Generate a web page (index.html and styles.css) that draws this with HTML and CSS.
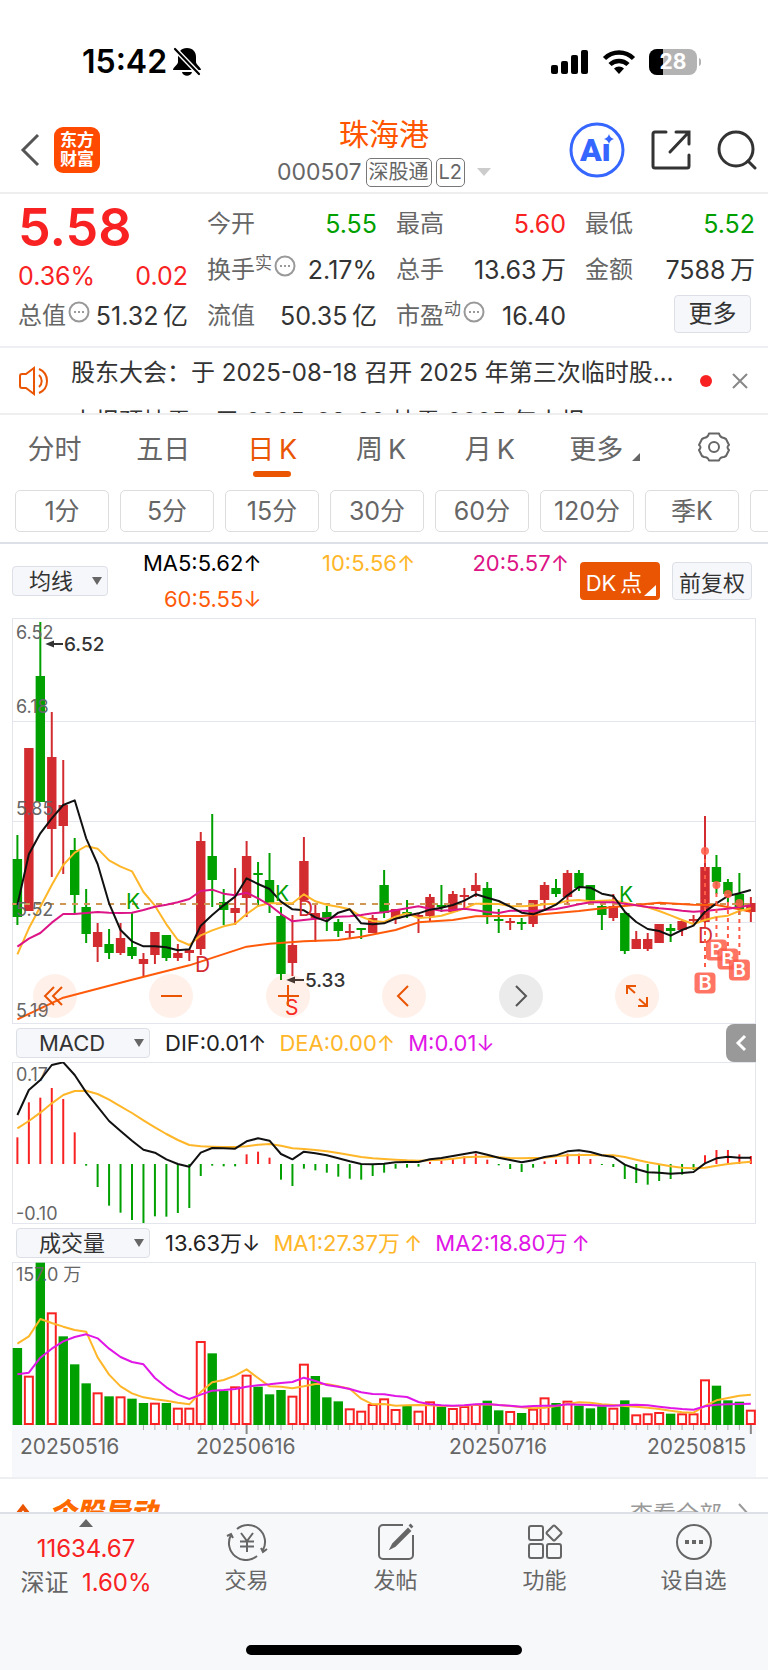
FILE: index.html
```html
<!DOCTYPE html>
<html lang="zh-CN">
<head>
    <meta charset="UTF-8">
    <meta name="viewport" content="width=device-width, initial-scale=1.0">
    <title>珠海港 000507</title>
    <link rel="stylesheet" href="styles.css">
</head>
<body>
    <div class="status-bar">
        <div class="status-time">
            <span>15:42</span>
            <svg width="28" height="30" viewBox="0 0 28 30">
                <path d="M14 1c-6 0-9 4-9 9v5c0 3-5 5-5 8h28c0-3-5-5-5-8v-5c0-5-3-9-9-9zM9 25h10c-1 5-9 5-10 0z" fill="#000"/>
                <path d="M1 1l26 27" stroke="#fff" stroke-width="5"/>
                <path d="M2 2l24 25" stroke="#000" stroke-width="2.200" stroke-linecap="round"/>
            </svg>
        </div>
        <div class="status-icons">
            <svg width="38" height="26" viewBox="0 0 38 26">
                <rect x="0" y="16" width="7" height="9" rx="2"/>
                <rect x="10" y="12" width="7" height="13" rx="2"/>
                <rect x="20" y="6" width="7" height="19" rx="2"/>
                <rect x="30" y="1" width="7" height="24" rx="2"/>
            </svg>
            <svg width="34" height="26" viewBox="0 0 34 26">
                <g fill="none" stroke="#000" stroke-width="4.500">
                    <path d="M2.500 9.500a20.500 20.500 0 0 1 29 0"/>
                    <path d="M8 15.500a13 13 0 0 1 18 0"/>
                </g>
                <path d="M17 25l-5-5.500a7 7 0 0 1 10 0z"/>
            </svg>
            <svg width="52" height="28" viewBox="0 0 52 28">
                <rect x="0" y="1" width="48" height="26" rx="8" fill="#b3b3b3"/>
                <path d="M14 1H8a8 8 0 0 0-8 8v10a8 8 0 0 0 8 8h6z"/>
                <path d="M50 10c3 1 3 7 0 8z" fill="#b3b3b3"/>
                <text x="24" y="21" class="battery-text">28</text>
            </svg>
        </div>
    </div>

    <header class="header">
        <div class="header-left">
            <button type="button" class="icon-btn" aria-label="返回">
                <svg width="20" height="34" viewBox="0 0 20 34"><path d="M18 2L3 17l15 15" fill="none" stroke="#555" stroke-width="3"/></svg>
            </button>
            <a href="#" class="logo">东方<br>财富</a>
        </div>
        <div class="header-title">
            <h1>珠海港</h1>
            <div class="header-code">
                <span>000507</span>
                <span class="tag">深股通</span>
                <span class="tag">L2</span>
                <svg width="14" height="8" viewBox="0 0 14 8"><path d="M0 0h14L7 8z" fill="#ccc"/></svg>
            </div>
        </div>
        <div class="header-right">
            <button type="button" class="icon-btn" aria-label="Ai">
                <svg width="56" height="56" viewBox="0 0 56 56">
                    <circle cx="28" cy="28" r="26" fill="#fff" stroke="#3566ff" stroke-width="3"/>
                    <text x="11" y="39" class="ai-text">Ai</text>
                    <path d="M33 11h12v9H33z" fill="#fff"/>
                    <path d="M40 12q1 4 5 5q-4 1-5 5q-1-4-5-5q4-1 5-5z" fill="#3566ff"/>
                </svg>
            </button>
            <button type="button" class="icon-btn" aria-label="分享">
                <svg width="40" height="40" viewBox="0 0 40 40" fill="none" stroke="#333" stroke-width="3" stroke-linecap="round">
                    <path d="M15 2H4a2 2 0 0 0-2 2v32a2 2 0 0 0 2 2h32a2 2 0 0 0 2-2V25"/>
                    <path d="M25 2h13v12M37 3L19 22"/>
                </svg>
            </button>
            <button type="button" class="icon-btn" aria-label="搜索">
                <svg width="40" height="40" viewBox="0 0 40 40" fill="none" stroke="#333" stroke-width="3" stroke-linecap="round">
                    <circle cx="19" cy="19" r="17"/>
                    <path d="M31 31l7 7"/>
                </svg>
            </button>
        </div>
    </header>

    <section class="quote">
        <div class="quote-col quote-main">
            <div class="price red">5.58</div>
            <div class="row row-change red"><span>0.36%</span><span>0.02</span></div>
            <div class="row"><span class="label">总值<svg class="info" viewBox="0 0 22 22"><circle cx="11" cy="11" r="9.500"/><path d="M6 11h2M10 11h2M14 11h2"/></svg></span><span>51.32&thinsp;亿</span></div>
        </div>
        <div class="quote-col">
            <div class="row"><span class="label">今开</span><span class="green">5.55</span></div>
            <div class="row"><span class="label">换手<sup>实</sup><svg class="info" viewBox="0 0 22 22"><circle cx="11" cy="11" r="9.500"/><path d="M6 11h2M10 11h2M14 11h2"/></svg></span><span>2.17%</span></div>
            <div class="row"><span class="label">流值</span><span>50.35&thinsp;亿</span></div>
        </div>
        <div class="quote-col">
            <div class="row"><span class="label">最高</span><span class="red">5.60</span></div>
            <div class="row"><span class="label">总手</span><span>13.63&thinsp;万</span></div>
            <div class="row"><span class="label">市盈<sup>动</sup><svg class="info" viewBox="0 0 22 22"><circle cx="11" cy="11" r="9.500"/><path d="M6 11h2M10 11h2M14 11h2"/></svg></span><span>16.40</span></div>
        </div>
        <div class="quote-col">
            <div class="row"><span class="label">最低</span><span class="green">5.52</span></div>
            <div class="row"><span class="label">金额</span><span>7588&thinsp;万</span></div>
            <div class="row row-more"><button type="button" class="btn-more">更多</button></div>
        </div>
    </section>

    <section class="news">
        <svg class="news-icon" width="34" height="30" viewBox="0 0 34 30" fill="none" stroke="#ea5504" stroke-width="2">
            <path d="M15 2v26L7 22H3a2 2 0 0 1-2-2V10a2 2 0 0 1 2-2h4z"/>
            <path d="M20 9a8 8 0 0 1 0 12M20 3a13 13 0 0 1 0 24"/>
        </svg>
        <ul class="news-list">
            <li><a href="#">股东大会：于 2025-08-18 召开 2025 年第三次临时股东大会</a></li>
            <li><a href="#">中报预披露：于 2025-08-29 披露 2025 年中报</a></li>
        </ul>
        <span class="dot"></span>
        <button type="button" class="icon-btn" aria-label="关闭">
            <svg width="16" height="16" viewBox="0 0 16 16"><path d="M1 1l14 14M15 1L1 15" stroke="#888" stroke-width="2"/></svg>
        </button>
    </section>

    <nav class="tabs">
        <button type="button">分时</button>
        <button type="button">五日</button>
        <button type="button" class="active">日&thinsp;K</button>
        <button type="button">周&thinsp;K</button>
        <button type="button">月&thinsp;K</button>
        <button type="button" class="tab-more">更多<svg class="corner" width="8" height="8" viewBox="0 0 8 8"><path d="M8 0v8H0z" fill="#666"/></svg></button>
        <button type="button" aria-label="设置">
            <svg width="32" height="30" viewBox="0 0 32 30" fill="none" stroke="#666" stroke-width="2">
                <path d="M11 1.500h10q1 4 5 4.500l2 1 3 6q-3 2 0 5l-3 6-2 1q-4 0-5 3.500H11q-1-3.500-5-3.500l-2-1-3-6q3-3 0-5l3-6 2-1q4-.5 5-4.500z" stroke-linejoin="round"/>
                <circle cx="16" cy="15" r="5"/>
            </svg>
        </button>
    </nav>

    <div class="periods">
        <button type="button">1分</button>
        <button type="button">5分</button>
        <button type="button">15分</button>
        <button type="button">30分</button>
        <button type="button">60分</button>
        <button type="button">120分</button>
        <button type="button">季K</button>
        <button type="button">年K</button>
    </div>

    <section class="ma-bar">
        <span class="picker picker-ma">
            <select aria-label="主图指标"><option>均线</option><option>BOLL</option></select>
        </span>
        <div class="ma-values">
            <span class="black">MA5:5.62↑</span>
            <span class="yellow">10:5.56↑</span>
            <span class="pink">20:5.57↑</span>
            <span class="orange">60:5.55↓</span>
        </div>
        <button type="button" class="btn-dk">DK&thinsp;点<svg class="corner" width="12" height="11" viewBox="0 0 12 11"><path d="M12 0v11H0z" fill="#fff"/></svg></button>
        <button type="button" class="btn-fq">前复权</button>
    </section>

    <section class="charts">
        <div class="pane kline">
            <svg id="kline" viewBox="0 0 744 406" role="img" aria-label="日K线"></svg>
            <div class="chart-controls">
                <button type="button" aria-label="最左"><svg viewBox="0 0 44 44"><path d="M21 13l-9 9 9 9M29 13l-9 9 9 9"/></svg></button>
                <button type="button" aria-label="缩小"><svg viewBox="0 0 44 44"><path d="M12 22h21"/></svg></button>
                <button type="button" aria-label="放大"><svg viewBox="0 0 44 44"><path d="M12 22h21M22 11v21"/></svg></button>
                <button type="button" aria-label="左移"><svg viewBox="0 0 44 44"><path d="M26 12L16 22l10 10"/></svg></button>
                <button type="button" class="disabled" aria-label="右移"><svg viewBox="0 0 44 44"><path d="M17 12l10 10-10 10"/></svg></button>
                <button type="button" aria-label="全屏"><svg viewBox="0 0 44 44"><path d="M12 20v-8h9M12 12l8 7M24 25l8 7M32 23v9h-9"/></svg></button>
            </div>
        </div>

        <div class="indicator-bar">
            <span class="picker"><select aria-label="副图指标一"><option>MACD</option><option>KDJ</option></select></span>
            <span class="dark">DIF:0.01↑</span>
            <span class="yellow">DEA:0.00↑</span>
            <span class="magenta">M:0.01↓</span>
            <button type="button" class="btn-expand" aria-label="展开">
                <svg width="12" height="18" viewBox="0 0 12 18"><path d="M10 2L3 9l7 7" fill="none" stroke="#fff" stroke-width="3"/></svg>
            </button>
        </div>
        <div class="pane">
            <svg id="macd" viewBox="0 0 744 162" role="img" aria-label="MACD"></svg>
        </div>

        <div class="indicator-bar">
            <span class="picker"><select aria-label="副图指标二"><option>成交量</option><option>成交额</option></select></span>
            <span class="dark">13.63万↓</span>
            <span class="yellow">MA1:27.37万&thinsp;↑</span>
            <span class="magenta">MA2:18.80万&thinsp;↑</span>
        </div>
        <div class="pane">
            <svg id="volume" viewBox="0 0 744 215" role="img" aria-label="成交量"></svg>
        </div>
    </section>

    <section class="promo">
        <svg width="18" height="30" viewBox="0 0 18 30"><path d="M2 20l7-9 7 9" fill="none" stroke="#ea5504" stroke-width="4"/></svg>
        <h2>个股异动</h2>
        <a href="#">查看全部</a>
        <svg width="14" height="26" viewBox="0 0 14 26"><path d="M2 2l10 11L2 24" fill="none" stroke="#999" stroke-width="2"/></svg>
    </section>

    <footer class="bottom-nav">
        <div class="nav-items">
            <a href="#" class="nav-index">
                <svg width="14" height="8" viewBox="0 0 14 8"><path d="M0 8h14L7 0z" fill="#666"/></svg>
                <span class="red">11634.67</span>
                <span>深证&nbsp; <b class="red">1.60%</b></span>
            </a>
            <a href="#">
                <svg width="42" height="38" viewBox="0 0 42 38" fill="none" stroke="#666" stroke-width="2">
                    <path d="M11 6A17 17 0 0 1 37 27M31 33A17 17 0 0 1 5 12M1 13l4-2 2 4M41 26l-4 3-2-4"/>
                    <path d="M15 10l6 8 6-8M21 18v11M14 18.500h14M14 23.500h14"/>
                </svg>
                <span>交易</span>
            </a>
            <a href="#">
                <svg width="38" height="38" viewBox="0 0 38 38" fill="none" stroke="#666" stroke-width="2">
                    <path d="M26 2H6a4 4 0 0 0-4 4v26a4 4 0 0 0 4 4h26a4 4 0 0 0 4-4V12"/>
                    <path d="M31 6L16 21l-2 4 4-2L33 8z" fill="#666"/>
                    <path d="M33 4l2-2" stroke-width="4"/>
                </svg>
                <span>发帖</span>
            </a>
            <a href="#">
                <svg width="38" height="38" viewBox="0 0 38 38" fill="none" stroke="#666" stroke-width="2">
                    <rect x="3" y="3" width="14" height="14" rx="2"/>
                    <rect x="3" y="21" width="14" height="14" rx="2"/>
                    <rect x="21" y="21" width="14" height="14" rx="2"/>
                    <path d="M27 3q1-1 2 0l6 6q1 1 0 2l-6 6q-1 1-2 0l-6-6q-1-1 0-2z"/>
                </svg>
                <span>功能</span>
            </a>
            <a href="#">
                <svg width="38" height="38" viewBox="0 0 38 38" fill="none" stroke="#666" stroke-width="2">
                    <circle cx="19" cy="19" r="17"/>
                    <path d="M10 19h4M17 19h4M24 19h4" stroke-width="4"/>
                </svg>
                <span>设自选</span>
            </a>
        </div>
        <div class="home-indicator"></div>
    </footer>

    <script src="script.js"></script>
</body>
</html>
```

FILE: styles.css
```css
* {
    box-sizing: border-box;
}
body {
    margin: 0;
    font-family: Inter, "Noto Sans CJK SC", sans-serif;
    font-size: 22px;
    line-height: 30px;
    color: #333;
    background-color: #fff;
}
h1, h2, ul {
    margin: 0;
    padding: 0;
}
a {
    color: inherit;
    text-decoration: none;
}
button, select {
    font-family: inherit;
    color: inherit;
    padding: 0;
    border: none;
    background: none;
    cursor: pointer;
}
svg {
    display: block;
    flex: none;
}
.icon-btn {
    display: block;
}
.red {
    color: #f82223;
}
.green {
    color: #00a000;
}
.black {
    color: #000;
}
.dark {
    color: #222;
}
.yellow {
    color: #ffb629;
}
.pink {
    color: #dc1486;
}
.magenta {
    color: #e016e6;
}
.orange {
    color: #ff5a0a;
}

/* status bar */
.status-bar {
    display: flex;
    justify-content: space-between;
    align-items: center;
    height: 108px;
    padding: 16px 67px 0 82px;
}
.status-time {
    display: flex;
    align-items: center;
    gap: 6px;
    font-size: 32px;
    font-weight: 600;
    color: #000;
}
.status-icons {
    display: flex;
    align-items: center;
    gap: 13px;
}
.battery-text {
    font-size: 21px;
    font-weight: 700;
    fill: #fff;
    text-anchor: middle;
}

/* header */
.header {
    display: grid;
    grid-template-columns: 1fr auto 1fr;
    align-items: center;
    height: 86px;
    padding: 0 11px;
    border-bottom: 2px solid #eee;
}
.header-left {
    display: flex;
    align-items: center;
    gap: 14px;
    padding-left: 9px;
}
.logo {
    width: 46px;
    height: 46px;
    padding: 4px 0;
    border-radius: 9px;
    background-color: #ff4a00;
    color: #fff;
    font-size: 17px;
    font-weight: 700;
    line-height: 19px;
    text-align: center;
}
.header-title {
    text-align: center;
}
.header-title h1 {
    font-size: 30px;
    font-weight: 400;
    line-height: 44px;
    color: #ff5500;
}
.header-code {
    display: flex;
    align-items: center;
    gap: 4px;
    line-height: 32px;
    font-size: 23px;
    color: #666;
}
.header-code svg {
    margin-left: 8px;
}
.tag {
    padding: 0 2px;
    border: 1px solid #777;
    border-radius: 5px;
    font-size: 20px;
    line-height: 27px;
}
.header-right {
    display: flex;
    justify-content: flex-end;
    align-items: center;
    gap: 26px;
}
.ai-text {
    font-family: Roboto, sans-serif;
    font-size: 32px;
    font-weight: 900;
    fill: #3566ff;
}

/* quote */
.quote {
    display: grid;
    grid-template-columns: repeat(4, 1fr);
    column-gap: 19px;
    padding: 7px 13px 7px 18px;
    border-bottom: 2px solid #edeff2;
    font-size: 25px;
}
.row {
    display: flex;
    justify-content: space-between;
    align-items: center;
    height: 46px;
    white-space: nowrap;
}
.price {
    height: 53px;
    font-size: 52px;
    font-weight: 600;
    line-height: 53px;
}
.row-change {
    height: 39px;
    padding-top: 4px;
}
.label {
    display: flex;
    align-items: center;
    font-size: 24px;
    color: #666;
}
.label sup {
    height: 34px;
    font-size: 17px;
    line-height: 20px;
}
.info {
    width: 22px;
    height: 22px;
    margin: 0 0 8px 2px;
    fill: none;
    stroke: #999;
    stroke-width: 2;
}
.row-more {
    justify-content: flex-end;
    height: 42px;
    padding-right: 4px;
}
.btn-more {
    width: 77px;
    height: 38px;
    border: 1px solid #dcdfe6;
    border-radius: 4px;
    background-color: #f6f7fa;
    font-size: 24px;
    line-height: 34px;
}

/* news ticker */
.news {
    display: flex;
    align-items: center;
    height: 67px;
    padding: 0 20px 0 19px;
    border-bottom: 2px solid #eee;
}
.news-icon {
    margin-right: 18px;
}
.news-list {
    flex: 1;
    min-width: 0;
    height: 65px;
    overflow: hidden;
    list-style: none;
    font-size: 24px;
    line-height: 49px;
}
.news-list li {
    overflow: hidden;
    white-space: nowrap;
    text-overflow: ellipsis;
}
.dot {
    width: 12px;
    height: 12px;
    margin: 0 20px 0 22px;
    border-radius: 50%;
    background-color: #f82223;
}

/* period tabs */
.tabs {
    display: flex;
    height: 66px;
}
.tabs button {
    position: relative;
    flex: 1;
    display: flex;
    justify-content: center;
    align-items: center;
    padding-bottom: 2px;
    font-size: 27px;
    color: #666;
}
.tabs .active {
    color: #ea5504;
}
.tabs .active::after {
    content: "";
    position: absolute;
    left: 50%;
    bottom: 4px;
    width: 38px;
    height: 6px;
    margin-left: -19px;
    border-radius: 3px;
    background-color: #ea5504;
}
.tabs .tab-more {
    padding-left: 6px;
}
.tabs .corner {
    align-self: flex-end;
    margin: 0 0 18px 9px;
}
.periods {
    display: flex;
    gap: 11px;
    padding: 9px 0 10px 15px;
    border-bottom: 2px solid #dde1e7;
    overflow: hidden;
}
.periods button {
    flex: none;
    width: 94px;
    height: 42px;
    border: 1px solid #ddd;
    border-radius: 5px;
    font-size: 25px;
    line-height: 38px;
    color: #666;
}

/* main indicator bar */
.ma-bar {
    display: flex;
    align-items: center;
    height: 74px;
    padding: 0 16px 0 12px;
}
.ma-values {
    flex: 1;
    display: grid;
    grid-template-columns: repeat(3, 1fr);
    row-gap: 6px;
    padding-right: 11px;
    text-align: right;
    white-space: nowrap;
}
.btn-dk, .btn-fq {
    position: relative;
    width: 80px;
    height: 38px;
    border-radius: 4px;
    font-size: 22px;
    white-space: nowrap;
}
.btn-dk {
    margin-right: 12px;
    padding-right: 12px;
    background-color: #ea5504;
    color: #fff;
}
.btn-dk .corner {
    position: absolute;
    right: 4px;
    bottom: 4px;
}
.btn-fq {
    border: 1px solid #dcdfe6;
    background-color: #f6f7fa;
}
.picker {
    position: relative;
    width: 134px;
    height: 30px;
}
.picker select {
    width: 100%;
    height: 100%;
    padding: 0 22px 0 0;
    border: 1px solid #dcdfe6;
    border-radius: 4px;
    background-color: #f6f7fa;
    font-size: 22px;
    line-height: 28px;
    text-align: center;
    appearance: none;
}
.picker::after {
    content: "";
    position: absolute;
    top: 11px;
    right: 6px;
    border: 5px solid transparent;
    border-top: 8px solid #666;
    border-bottom: none;
    pointer-events: none;
}
.picker-ma {
    width: 96px;
}
.picker-ma select {
    padding-right: 18px;
}

/* charts */
.charts {
    padding: 0 12px;
}
.pane {
    position: relative;
}
.pane svg {
    width: 100%;
    height: auto;
}
.chart-controls {
    position: absolute;
    left: 21px;
    right: 97px;
    bottom: 6px;
    display: flex;
    justify-content: space-between;
}
.chart-controls button {
    width: 44px;
    height: 44px;
    border-radius: 50%;
    background-color: rgba(255, 110, 40, 0.1);
}
.chart-controls path {
    fill: none;
    stroke: #ea5504;
    stroke-width: 2;
}
.chart-controls .disabled {
    background-color: #ebebeb;
}
.chart-controls .disabled path {
    stroke: #555;
}
.indicator-bar {
    display: flex;
    align-items: center;
    gap: 13px;
    height: 38px;
    padding-left: 4px;
    white-space: nowrap;
}
.indicator-bar .picker {
    margin-right: 2px;
}
.btn-expand {
    display: flex;
    justify-content: center;
    align-items: center;
    width: 30px;
    height: 38px;
    margin-left: auto;
    border-radius: 8px 0 0 8px;
    background-color: #999;
}

/* chart drawing */
.frame {
    fill: none;
    stroke: #e3e6ec;
}
.grid {
    stroke: #e3e6ec;
}
.up {
    fill: #d22c30;
    stroke: #d22c30;
}
.down {
    fill: #00a000;
    stroke: #00a000;
}
.candle {
    stroke-width: 2;
}
.candle rect {
    stroke: none;
}
.line {
    fill: none;
    stroke-width: 2;
    stroke-linejoin: round;
}
.line-black { stroke: #111; }
.line-yellow { stroke: #ffb629; }
.line-pink { stroke: #dc1486; }
.line-orange { stroke: #ff5a0a; }
.line-magenta { stroke: #e016e6; }
.last-price {
    stroke: #d09654;
    stroke-width: 2;
    stroke-dasharray: 6 6;
}
.axis {
    font-size: 18px;
    fill: #666;
}
.date {
    font-size: 21px;
    fill: #666;
}
.extreme {
    font-size: 19px;
    font-weight: 500;
    fill: #333;
}
.extreme-arrow {
    fill: #333;
    stroke: #333;
    stroke-width: 2;
}
.mark {
    font-size: 21px;
}
.mark-k { fill: #00a000; }
.mark-d { fill: #d22c30; }
.mark-s { fill: #f82223; }
.buy {
    fill: #ff5c48;
    opacity: 0.85;
}
.buy-text {
    font-size: 20px;
    font-weight: 600;
    fill: #fff;
    text-anchor: middle;
}
.buy-line {
    stroke: #ff5c48;
    stroke-dasharray: 4 4;
    stroke-width: 2;
}
.bar-up {
    stroke: #f82223;
    stroke-width: 2;
}
.bar-down {
    stroke: #00a000;
    stroke-width: 2;
}
.vol-up {
    fill: #fff;
    stroke: #f82223;
    stroke-width: 2;
}
.vol-down {
    fill: #00a000;
}
.axis-bg {
    fill: #f7f8fb;
}
.tick {
    stroke: #aaa;
}
.tick-long {
    stroke: #888;
    stroke-width: 2;
}

/* promo strip */
.promo {
    display: flex;
    align-items: flex-start;
    height: 35px;
    padding: 17px 17px 0 14px;
    border-top: 2px solid #edeff2;
    overflow: hidden;
}
.promo h2 {
    flex: 1;
    padding-left: 17px;
    font-size: 27px;
    font-style: italic;
    font-weight: 900;
    line-height: 34px;
    color: #ff6a00;
}
.promo a {
    margin-right: 15px;
    font-size: 23px;
    line-height: 36px;
    color: #999;
}
.promo svg:last-child {
    margin-top: 6px;
}

/* bottom nav */
.bottom-nav {
    height: 158px;
    border-top: 2px solid #dde1e7;
    background-color: #f7f8fa;
}
.nav-items {
    display: flex;
    height: 131px;
    color: #666;
}
.nav-items a {
    flex: 149;
    display: flex;
    flex-direction: column;
    align-items: center;
    gap: 4px;
    padding-top: 9px;
}
.nav-items .nav-index {
    flex: 172;
    padding-top: 5px;
    font-size: 24px;
}
.nav-index svg {
    margin-bottom: 3px;
}
.nav-index b {
    font-weight: 400;
}
.home-indicator {
    width: 276px;
    height: 10px;
    margin: 0 auto;
    border-radius: 5px;
    background-color: #000;
}
```

FILE: script.js
```javascript
// [up/down, high, body top, body bottom, low]
const candles = [
    ['d', 217, 241, 299, 307], ['u', 130, 130, 293, 293], ['d', 4, 58, 184, 184], ['u', 94, 139, 211, 259], ['u', 142, 187, 208, 256],
    ['d', 220, 232, 277, 296], ['d', 271, 289, 316, 325], ['u', 305, 314, 329, 344], ['d', 311, 326, 335, 341], ['u', 305, 320, 335, 337],
    ['d', 295, 329, 338, 341], ['u', 335, 341, 346, 359], ['u', 314, 314, 337, 346], ['d', 317, 317, 340, 343], ['u', 326, 335, 340, 343],
    ['u', 331, 332, 335, 343], ['u', 214, 223, 331, 337], ['d', 196, 238, 262, 289], ['d', 271, 284, 292, 307], ['u', 250, 290, 295, 307],
    ['u', 223, 238, 280, 299], ['d', 244, 255, 257, 289], ['d', 235, 262, 286, 295], ['d', 289, 298, 356, 362], ['u', 297, 327, 345, 358],
    ['u', 219, 243, 282, 282], ['u', 285, 295, 300, 324], ['d', 288, 294, 301, 313], ['d', 301, 304, 313, 319], ['u', 306, 313, 315, 321],
    ['d', 310, 310, 312, 321], ['u', 297, 300, 315, 315], ['d', 252, 267, 295, 300], ['u', 291, 291, 301, 306], ['d', 282, 294, 296, 300],
    ['u', 295, 297, 299, 315], ['u', 276, 279, 298, 303], ['d', 267, 287, 289, 294], ['u', 273, 276, 294, 294], ['u', 270, 277, 279, 291],
    ['u', 255, 267, 273, 279], ['d', 264, 270, 297, 306], ['d', 291, 301, 303, 315], ['u', 300, 303, 305, 312], ['d', 300, 304, 306, 312],
    ['u', 282, 282, 306, 309], ['u', 264, 267, 282, 292], ['d', 261, 270, 276, 279], ['u', 252, 255, 279, 285], ['d', 252, 255, 270, 273],
    ['d', 267, 267, 283, 287], ['d', 285, 288, 297, 312], ['u', 276, 288, 300, 303], ['d', 294, 295, 333, 336], ['u', 313, 321, 331, 331],
    ['u', 315, 321, 331, 333], ['u', 306, 306, 325, 325], ['d', 306, 310, 313, 324], ['u', 301, 303, 312, 318], ['u', 297, 301, 303, 307],
    ['u', 198, 249, 304, 309], ['d', 237, 249, 264, 276], ['d', 261, 264, 276, 285], ['d', 255, 276, 291, 297], ['u', 279, 285, 294, 304]
];

// lines are stored in thirds of a pixel
const ma5 = [885, 733, 670, 625, 585, 571, 685, 762, 880, 960, 994, 1009, 1009, 1012, 1021, 1018, 947, 915, 886, 860, 805, 822, 837, 875, 898, 901, 922, 934, 908, 898, 940, 943, 940, 926, 917, 910, 899, 893, 885, 872, 853, 863, 873, 890, 908, 913, 900, 884, 856, 831, 833, 851, 858, 905, 936, 957, 963, 977, 960, 947, 905, 880, 858, 850, 840];
const ma10 = [1033, 955, 890, 825, 765, 728, 708, 716, 751, 770, 784, 846, 887, 943, 990, 1005, 976, 961, 949, 941, 912, 888, 880, 880, 880, 853, 874, 884, 890, 898, 920, 933, 936, 920, 910, 924, 922, 917, 907, 896, 881, 881, 882, 888, 889, 887, 883, 881, 872, 870, 874, 872, 871, 878, 886, 892, 903, 916, 930, 942, 930, 921, 917, 903, 895];
const ma20 = [1010, 986, 969, 938, 912, 912, 909, 906, 908, 909, 908, 900, 890, 884, 877, 867, 843, 839, 851, 856, 848, 865, 885, 912, 934, 930, 926, 925, 920, 919, 915, 910, 907, 901, 895, 889, 896, 902, 900, 896, 901, 906, 909, 902, 902, 903, 900, 897, 890, 883, 877, 877, 877, 881, 886, 891, 895, 898, 902, 905, 903, 899, 896, 891, 886];
const ma60 = { 0: 1228, 4: 1163, 10: 1109, 15: 1066, 20: 1010, 22: 1001, 25: 994, 28: 990, 30: 980, 33: 960, 35: 937, 38: 930, 40: 919, 44: 918, 47: 909, 49: 903, 52: 891, 56: 878, 59: 884, 61: 885, 63: 898, 64: 905 };

const macdBars = [352, 247, 233, 204, 237, 337, 437, 501, 557, 578, 600, 609, 589, 590, 579, 564, 468, 437, 439, 439, 403, 395, 413, 479, 498, 446, 451, 458, 470, 476, 479, 468, 458, 446, 443, 440, 426, 422, 415, 408, 401, 419, 436, 447, 456, 443, 424, 419, 401, 401, 417, 435, 441, 477, 489, 494, 483, 477, 464, 450, 406, 390, 390, 403, 408];
const dif = [285, 210, 180, 135, 127, 165, 217, 260, 303, 333, 362, 389, 398, 418, 432, 440, 398, 384, 385, 386, 364, 355, 362, 402, 418, 395, 400, 406, 415, 424, 432, 433, 431, 427, 426, 426, 418, 414, 408, 402, 396, 404, 413, 420, 427, 421, 411, 406, 394, 391, 396, 406, 411, 434, 447, 457, 458, 461, 459, 456, 430, 415, 410, 413, 413];
const dea = [325, 303, 278, 250, 225, 213, 212, 222, 239, 259, 279, 301, 322, 342, 360, 375, 379, 380, 381, 381, 379, 374, 372, 377, 385, 387, 390, 394, 399, 405, 411, 415, 417, 419, 421, 422, 421, 419, 416, 412, 410, 410, 412, 414, 415, 414, 413, 409, 406, 405, 405, 406, 406, 411, 419, 427, 433, 439, 443, 445, 443, 437, 432, 428, 425];

const volumes = [384, 467, 128, 277, 349, 433, 490, 517, 529, 529, 536, 549, 548, 549, 563, 563, 363, 400, 512, 499, 464, 500, 523, 510, 527, 431, 468, 532, 544, 565, 572, 552, 535, 567, 557, 572, 544, 560, 564, 558, 552, 542, 571, 573, 579, 566, 532, 549, 542, 557, 565, 559, 563, 541, 583, 580, 576, 581, 580, 580, 478, 497, 541, 545, 569];
const redVolumes = [1, 3, 7, 9, 12, 14, 15, 16, 19, 20, 24, 25, 29, 30, 31, 32, 33, 35, 36, 38, 39, 40, 43, 45, 46, 48, 52, 54, 55, 56, 58, 59, 60, 64];
const volMa1 = [371, 349, 297, 309, 320, 330, 335, 412, 464, 499, 520, 532, 538, 542, 548, 553, 516, 487, 480, 467, 448, 474, 499, 500, 505, 499, 492, 492, 499, 506, 536, 553, 552, 557, 556, 555, 556, 558, 558, 557, 554, 553, 555, 558, 562, 565, 563, 558, 552, 547, 548, 553, 555, 558, 560, 563, 567, 572, 577, 578, 558, 541, 534, 527, 524];
const volMa2 = [463, 458, 413, 386, 364, 351, 343, 355, 386, 411, 426, 433, 474, 502, 524, 537, 524, 512, 510, 507, 500, 496, 493, 489, 486, 473, 483, 495, 500, 507, 517, 522, 523, 528, 531, 546, 553, 556, 557, 556, 553, 552, 555, 557, 560, 558, 557, 557, 553, 554, 555, 557, 557, 555, 554, 556, 560, 564, 567, 569, 559, 554, 553, 552, 551];

const x = i => 5.4 + 11.46 * i;

function line(data, offset, color) {
    const points = Object.entries(data).map(([i, v]) => `${x(+i)},${v / 3 - offset}`).join(' ');
    return `<polyline class="line line-${color}" points="${points}"/>`;
}

function text(cls, tx, ty, value) {
    return `<text class="${cls}" x="${tx}" y="${ty}">${value}</text>`;
}

function drawKline() {
    let s = '<rect class="frame" x="0.5" y="0.5" width="743" height="405"/>';
    [103, 203, 304].forEach(y => {
        s += `<path class="grid" d="M0 ${y}.5h744"/>`;
    });
    candles.forEach(([side, high, top, bottom, low], i) => {
        s += `<g class="candle ${side === 'u' ? 'up' : 'down'}"><path d="M${x(i)} ${high}V${low}"/>`;
        s += `<rect x="${x(i) - 4.7}" y="${top}" width="9.4" height="${bottom - top}"/></g>`;
    });
    s += '<path class="last-price" d="M0 286h744"/>';
    s += line(ma60, 8, 'orange') + line(ma10, 8, 'yellow') + line(ma20, 8, 'pink') + line(ma5, 8, 'black');
    s += text('axis', 4, 21, '6.52') + text('axis', 4, 95, '6.18') + text('axis', 4, 197, '5.85') + text('axis', 4, 298, '5.52') + text('axis', 4, 399, '5.19');

    // highest and lowest price
    s += '<path class="extreme-arrow" d="M51 26H38M36 26l5-2v4z"/>' + text('extreme', 52, 33, '6.52');
    s += '<path class="extreme-arrow" d="M292 362h-13M277 362l5-2v4z"/>' + text('extreme', 293, 369, '5.33');

    [[114, 291], [263, 283], [607, 284]].forEach(p => { s += text('mark mark-k', p[0], p[1], 'K'); });
    [[183, 354], [286, 298], [686, 325]].forEach(p => { s += text('mark mark-d', p[0], p[1], 'D'); });
    s += text('mark mark-s', 273, 397, 'S');

    // buy points: candle index, dot y, badge y
    [[60, 233, 365], [61, 267, 332], [62, 276, 341], [63, 285, 352]].forEach(([i, dot, badge]) => {
        s += `<path class="buy-line" d="M${x(i)} ${dot}V${badge - 12}"/>`;
        s += `<circle class="buy" cx="${x(i)}" cy="${dot}" r="4"/>`;
        s += `<rect class="buy" x="${x(i) - 10.5}" y="${badge - 10.5}" width="21" height="21" rx="4"/>`;
        s += text('buy-text', x(i), badge + 7, 'B');
    });
    document.getElementById('kline').innerHTML = s;
}

function drawMacd() {
    let s = '<rect class="frame" x="0.5" y="0.5" width="743" height="161"/>';
    macdBars.forEach((v, i) => {
        s += `<path class="${v < 432 ? 'bar-up' : 'bar-down'}" d="M${x(i)} 102V${v / 3 - 42}"/>`;
    });
    s += text('axis', 4, 19, '0.17') + text('axis', 4, 158, '-0.10');
    s += line(dea, 42, 'yellow') + line(dif, 42, 'black');
    document.getElementById('macd').innerHTML = s;
}

function drawVolume() {
    let s = '<rect class="axis-bg" x="0" y="162" width="744" height="53"/>';
    s += '<rect class="frame" x="0.5" y="0.5" width="743" height="162"/>';
    volumes.forEach((v, i) => {
        const top = v / 3 - 42;
        if (redVolumes.includes(i)) {
            s += `<rect class="vol-up" x="${x(i) - 4}" y="${top + 1}" width="8" height="${161 - top}"/>`;
        } else {
            s += `<rect class="vol-down" x="${x(i) - 4.7}" y="${top}" width="9.4" height="${163 - top}"/>`;
        }
        if (i > 10) {
            const long = [20, 42, 64].includes(i);
            s += `<path class="${long ? 'tick-long' : 'tick'}" d="M${x(i)} 163v${long ? 9 : 5}"/>`;
        }
    });
    s += text('axis', 4, 19, '157.0 万');
    s += line(volMa1, 42, 'yellow') + line(volMa2, 42, 'magenta');
    s += text('date', 8, 192, '20250516') + text('date', 184, 192, '20250616') + text('date', 437, 192, '20250716') + text('date', 635, 192, '20250815');
    document.getElementById('volume').innerHTML = s;
}

drawKline();
drawMacd();
drawVolume();
```
